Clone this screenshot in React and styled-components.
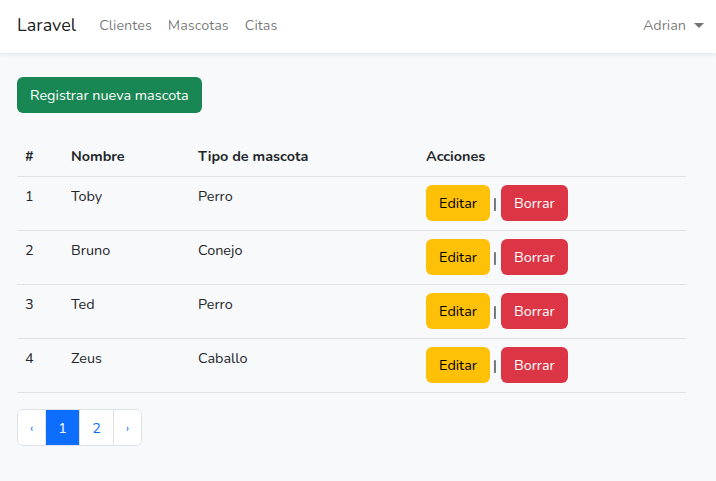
import styled, { createGlobalStyle } from "styled-components";

const GlobalStyle = createGlobalStyle`
  body {
    margin: 0;
    background: #f8f9fa;
    font-family: "Nunito", "Lato", "Noto Sans", sans-serif;
    font-size: 14.4px;
    color: #212529;
  }
`;

const mascotas = [
  { id: 1, nombre: "Toby", tipo: "Perro" },
  { id: 2, nombre: "Bruno", tipo: "Conejo" },
  { id: 3, nombre: "Ted", tipo: "Perro" },
  { id: 4, nombre: "Zeus", tipo: "Caballo" },
];

const App = () => {
  return (
    <>
      <GlobalStyle />
      <Navbar>
        <Brand>Laravel</Brand>
        <NavLinks>
          <NavLink>Clientes</NavLink>
          <NavLink>Mascotas</NavLink>
          <NavLink>Citas</NavLink>
        </NavLinks>
        <UserMenu>
          Adrian
          <Caret />
        </UserMenu>
      </Navbar>
      <Main>
        <Button $bg="#198754" $color="#fff" $pad="0 13px">
          Registrar nueva mascota
        </Button>
        <Table>
          <colgroup>
            <col style={{ width: 46 }} />
            <col style={{ width: 127 }} />
            <col style={{ width: 228 }} />
            <col />
          </colgroup>
          <thead>
            <tr>
              <Th>#</Th>
              <Th>Nombre</Th>
              <Th>Tipo de mascota</Th>
              <Th>Acciones</Th>
            </tr>
          </thead>
          <tbody>
            {mascotas.map((m) => (
              <tr key={m.id}>
                <Td>{m.id}</Td>
                <Td>{m.nombre}</Td>
                <Td>{m.tipo}</Td>
                <Td>
                  <Actions>
                    <Button $bg="#ffc107" $color="#000" $w="64px">
                      Editar
                    </Button>
                    <Sep>|</Sep>
                    <Button $bg="#dc3545" $color="#fff" $w="67px">
                      Borrar
                    </Button>
                  </Actions>
                </Td>
              </tr>
            ))}
          </tbody>
        </Table>
        <Pagination>
          <PageItem $w="27px" $small>‹</PageItem>
          <PageItem $w="34px" $active>1</PageItem>
          <PageItem $w="34px">2</PageItem>
          <PageItem $w="28px" $small>›</PageItem>
        </Pagination>
      </Main>
    </>
  );
};

const Navbar = styled.nav`
  height: 53px;
  background: #fff;
  box-shadow: 0 2px 4px rgba(0, 0, 0, 0.075);
  display: flex;
  align-items: center;
  padding: 0 12px 0 17px;
  box-sizing: border-box;
`;

const Brand = styled.div`
  font-size: 18px;
  color: rgba(0, 0, 0, 0.9);
  margin-right: 23px;
  margin-top: -3px;
`;

const NavLinks = styled.div`
  display: flex;
  gap: 16px;
  flex: 1;
`;

const NavLink = styled.span`
  color: rgba(0, 0, 0, 0.55);
  font-size: 14.4px;
  margin-top: -3px;
`;

const UserMenu = styled.div`
  color: rgba(0, 0, 0, 0.55);
  display: flex;
  align-items: center;
  margin-top: -3px;
`;

const Caret = styled.span`
  display: inline-block;
  margin-left: 8px;
  border-top: 5px solid rgba(0, 0, 0, 0.55);
  border-left: 5px solid transparent;
  border-right: 5px solid transparent;
`;

const Main = styled.main`
  padding: 24px 30px 0 17px;
`;

const Button = styled.button`
  display: inline-flex;
  align-items: center;
  justify-content: center;
  height: 36px;
  width: ${(p) => p.$w || "auto"};
  padding: ${(p) => p.$pad || "0"};
  border: none;
  border-radius: 6px;
  background: ${(p) => p.$bg};
  color: ${(p) => p.$color};
  font-family: inherit;
  font-size: 14.4px;
`;

const Table = styled.table`
  width: 100%;
  table-layout: fixed;
  margin-top: 24px;
  border-collapse: collapse;
  background: #f8f9fa;
`;

const Th = styled.th`
  text-align: left;
  font-weight: 700;
  height: 37px;
  padding: 0 8px 2px;
  border-bottom: 1px solid #dee2e6;
`;

const Td = styled.td`
  padding: 8px 8px 9px;
  vertical-align: top;
  border-bottom: 1px solid #dee2e6;
  line-height: 22px;
`;

const Actions = styled.div`
  display: flex;
  align-items: center;
`;

const Sep = styled.span`
  margin: 0 4px 0 3px;
  color: #212529;
`;

const Pagination = styled.div`
  display: inline-flex;
  margin-top: 16px;
  border: 1px solid #dee2e6;
  border-radius: 6px;
  overflow: hidden;
  background: #fff;
`;

const PageItem = styled.span`
  width: ${(p) => p.$w};
  height: 35px;
  display: flex;
  align-items: center;
  justify-content: center;
  box-sizing: border-box;
  background: ${(p) => (p.$active ? "#0d6efd" : "#fff")};
  color: ${(p) => (p.$active ? "#fff" : "#0d6efd")};
  font-size: ${(p) => (p.$small ? "12px" : "14.4px")};
  & + & {
    border-left: 1px solid #dee2e6;
  }
`;

export default App;
